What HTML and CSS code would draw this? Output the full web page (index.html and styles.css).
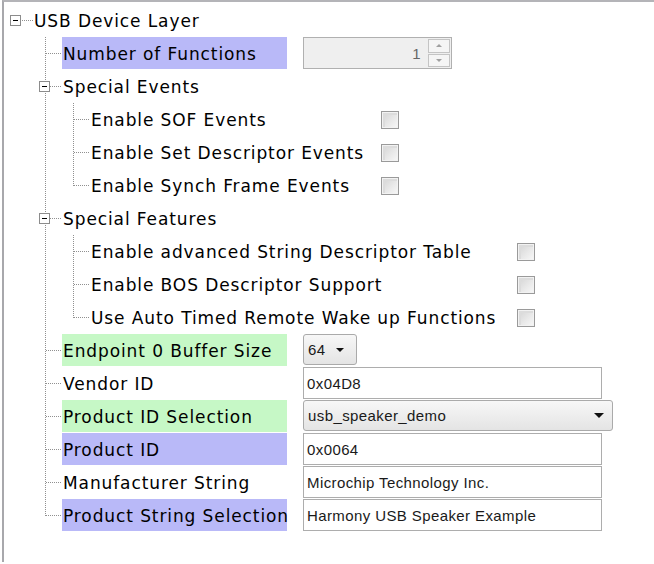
FILE: index.html
```html
<!DOCTYPE html>
<html>
<head>
<meta charset="utf-8">
<link rel="stylesheet" href="styles.css">
</head>
<body>
<div class="panel">
  <div class="row l0">
    <span class="exp"></span>
    <span class="lbl">USB Device Layer</span>
  </div>
  <div class="group g1">
    <div class="row l1">
      <span class="lbl w1 purple">Number of Functions</span>
      <span class="spin"><span class="spin-val">1</span><span class="spin-btns"><span class="sb up"></span><span class="sb down"></span></span></span>
    </div>
    <div class="row l1 parent">
      <span class="exp"></span>
      <span class="lbl">Special Events</span>
    </div>
    <div class="group g2">
      <div class="row l2"><span class="lbl w2a">Enable SOF Events</span><span class="cb"></span></div>
      <div class="row l2"><span class="lbl w2a">Enable Set Descriptor Events</span><span class="cb"></span></div>
      <div class="row l2"><span class="lbl w2a">Enable Synch Frame Events</span><span class="cb"></span></div>
    </div>
    <div class="row l1 parent">
      <span class="exp"></span>
      <span class="lbl">Special Features</span>
    </div>
    <div class="group g2">
      <div class="row l2"><span class="lbl w2b">Enable advanced String Descriptor Table</span><span class="cb"></span></div>
      <div class="row l2"><span class="lbl w2b">Enable BOS Descriptor Support</span><span class="cb"></span></div>
      <div class="row l2"><span class="lbl w2b">Use Auto Timed Remote Wake up Functions</span><span class="cb"></span></div>
    </div>
    <div class="row l1">
      <span class="lbl w1 green">Endpoint 0 Buffer Size</span>
      <span class="combo small"><span class="combo-val">64</span><span class="arrow"></span></span>
    </div>
    <div class="row l1">
      <span class="lbl w1">Vendor ID</span>
      <span class="field">0x04D8</span>
    </div>
    <div class="row l1">
      <span class="lbl w1 green">Product ID Selection</span>
      <span class="combo wide"><span class="combo-val">usb_speaker_demo</span><span class="arrow"></span></span>
    </div>
    <div class="row l1">
      <span class="lbl w1 purple">Product ID</span>
      <span class="field">0x0064</span>
    </div>
    <div class="row l1">
      <span class="lbl w1">Manufacturer String</span>
      <span class="field">Microchip Technology Inc.</span>
    </div>
    <div class="row l1">
      <span class="lbl w1 purple">Product String Selection</span>
      <span class="field">Harmony USB Speaker Example</span>
    </div>
  </div>
</div>
</body>
</html>
```
FILE: styles.css
```css
html, body {
  margin: 0;
  padding: 0;
  background: #ffffff;
}
body {
  width: 654px;
  height: 564px;
  overflow: hidden;
}
.panel {
  margin-left: 2px;
  height: 562px;
  border-top: 2px solid #b4b4b8;
  border-left: 2px solid #a8a8ac;
  padding-top: 2px;
  box-sizing: border-box;
  font-family: "DejaVu Sans", Verdana, sans-serif;
  font-size: 17px;
  letter-spacing: 0.9px;
  color: #000;
}
.row {
  position: relative;
  display: flex;
  align-items: flex-start;
  height: 33px;
}
.lbl {
  display: flex;
  align-items: center;
  height: 32px;
  padding-left: 1px;
  padding-top: 1px;
  box-sizing: border-box;
  white-space: nowrap;
  flex: none;
}
.purple { background: #b9b9f8; }
.green { background: #c6f8c6; }

/* level 0 */
.l0 { padding-left: 29px; }
.l0 .exp { left: 6px; }
.l0::after {
  content: "";
  position: absolute;
  left: 18px;
  top: 16px;
  width: 11px;
  border-top: 1px dotted #909090;
}

/* expander box */
.exp {
  position: absolute;
  top: 11px;
  width: 9px;
  height: 9px;
  border: 1px solid #8c8c8c;
  background: #fff;
  z-index: 2;
}
.exp::after {
  content: "";
  position: absolute;
  left: 2px;
  top: 4px;
  width: 5px;
  height: 1px;
  background: #000;
}

/* groups and guide lines */
.group { position: relative; }
.group::before {
  content: "";
  position: absolute;
  top: 0;
  bottom: 16px;
  border-left: 1px dotted #909090;
}
.g1::before { left: 41px; }
.g2::before { left: 69px; }

.l1 { padding-left: 58px; }
.l1::before {
  content: "";
  position: absolute;
  left: 42px;
  top: 16px;
  width: 15px;
  border-top: 1px dotted #909090;
}
.l1.parent::before { left: 46px; width: 11px; }
.l1 .exp { left: 35px; }

.l2 { padding-left: 86px; }
.l2::before {
  content: "";
  position: absolute;
  left: 70px;
  top: 16px;
  width: 15px;
  border-top: 1px dotted #909090;
}

.w1 { width: 225px; margin-right: 16px; }
.w2a { width: 275px; margin-right: 16px; }
.w2b { width: 411px; margin-right: 16px; }

/* checkbox */
.cb {
  flex: none;
  margin-top: 8px;
  width: 18px;
  height: 18px;
  box-sizing: border-box;
  border: 1px solid #9a9a9a;
  background: linear-gradient(135deg, #d2d2d2 0%, #e8e8e8 55%, #f8f8f8 100%);
  box-shadow: inset 0 0 0 1px #f2f2f2, inset 1px 1px 0 2px #dcdcdc;
}

/* fields */
.field, .combo, .spin {
  font-family: "Liberation Sans", Arial, sans-serif;
  font-size: 15px;
  letter-spacing: 0.4px;
  color: #1a1a1a;
  box-sizing: border-box;
  flex: none;
}
.field {
  display: flex;
  align-items: center;
  width: 299px;
  height: 32px;
  padding-left: 3px;
  border: 1px solid #adadad;
  background: #fff;
}
.combo {
  display: flex;
  align-items: center;
  height: 31px;
  padding-left: 4px;
  border: 1px solid #aaaaaa;
  border-radius: 3px;
  background: linear-gradient(#f7f7f7, #e4e4e4);
}
.combo.small { width: 54px; }
.combo.wide { width: 310px; }
.combo-val { flex: 1; }
.arrow {
  width: 0;
  height: 0;
  border-left: 5px solid transparent;
  border-right: 5px solid transparent;
  border-top: 5px solid #111;
  margin-right: 8px;
}
.combo.small .arrow {
  margin-right: 12px;
  border-left-width: 4px;
  border-right-width: 4px;
  border-top-width: 4px;
}

.spin {
  display: flex;
  width: 149px;
  height: 32px;
  border: 1px solid #b0b0b0;
  background: #efefef;
  color: #666;
}
.spin-val {
  flex: 1;
  display: flex;
  align-items: center;
  justify-content: flex-end;
  padding-right: 6px;
}
.spin-btns {
  display: flex;
  flex-direction: column;
  width: 22px;
  margin: 1px;
  gap: 1px;
}
.sb {
  flex: 1;
  border: 1px solid #c4c4c4;
  background: #f5f5f5;
  display: flex;
  align-items: center;
  justify-content: center;
}
.sb::after {
  content: "";
  border-left: 3px solid transparent;
  border-right: 3px solid transparent;
}
.up::after { border-bottom: 3px solid #a0a0a0; }
.down::after { border-top: 3px solid #a0a0a0; }
```
